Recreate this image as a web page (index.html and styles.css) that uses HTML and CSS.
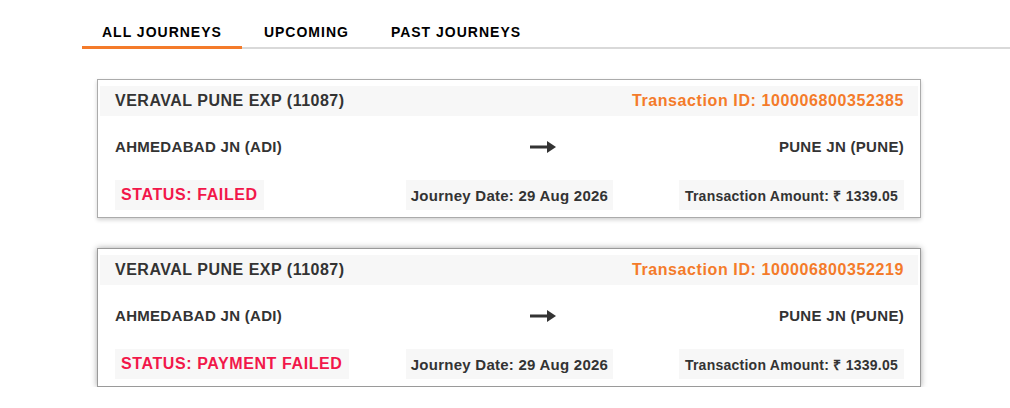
FILE: index.html
```html
<!DOCTYPE html>
<html lang="en">
<head>
    <meta charset="UTF-8">
    <meta name="viewport" content="width=device-width, initial-scale=1.0">
    <title>My Transactions</title>
    <link rel="stylesheet" href="styles.css">
</head>
<body>
    <nav class="tabs">
        <a class="tab active" href="#">ALL JOURNEYS</a>
        <a class="tab" href="#">UPCOMING</a>
        <a class="tab" href="#">PAST JOURNEYS</a>
    </nav>

    <div class="journeys">
        <div class="card">
            <div class="card-head">
                <span class="train-name">VERAVAL PUNE EXP (11087)</span>
                <span class="txn-id">Transaction ID: 100006800352385</span>
            </div>
            <div class="route">
                <span class="station">AHMEDABAD JN (ADI)</span>
                <div class="route-right">
                    <svg class="arrow" width="26" height="12" viewBox="0 0 26 12">
                        <rect x="0" y="4.5" width="18" height="3" fill="#333"/>
                        <polygon points="17,0 26,6 17,12" fill="#333"/>
                    </svg>
                    <span class="station">PUNE JN (PUNE)</span>
                </div>
            </div>
            <div class="card-foot">
                <span class="chip status">STATUS: FAILED</span>
                <span class="chip date">Journey Date: 29 Aug 2026</span>
                <span class="chip amount">Transaction Amount: ₹ 1339.05</span>
            </div>
        </div>

        <div class="card card-focus">
            <div class="card-head">
                <span class="train-name">VERAVAL PUNE EXP (11087)</span>
                <span class="txn-id">Transaction ID: 100006800352219</span>
            </div>
            <div class="route">
                <span class="station">AHMEDABAD JN (ADI)</span>
                <div class="route-right">
                    <svg class="arrow" width="26" height="12" viewBox="0 0 26 12">
                        <rect x="0" y="4.5" width="18" height="3" fill="#333"/>
                        <polygon points="17,0 26,6 17,12" fill="#333"/>
                    </svg>
                    <span class="station">PUNE JN (PUNE)</span>
                </div>
            </div>
            <div class="card-foot">
                <span class="chip status">STATUS: PAYMENT FAILED</span>
                <span class="chip date">Journey Date: 29 Aug 2026</span>
                <span class="chip amount">Transaction Amount: ₹ 1339.05</span>
            </div>
        </div>
    </div>
</body>
</html>
```

FILE: styles.css
```css
body {
    font-family: "Liberation Sans", Arial, sans-serif;
    background-color: #ffffff;
    color: #333333;
    margin: 0;
}

.tabs {
    display: flex;
    gap: 2px;
    margin: 22px 0 0 82px;
    border-bottom: 2px solid #d9d9d9;
}

.tab {
    display: block;
    padding: 0 20px 4px;
    line-height: 20px;
    font-size: 14px;
    font-weight: bold;
    letter-spacing: 1px;
    color: #000000;
    text-decoration: none;
    border-bottom: 3px solid transparent;
    margin-bottom: -2px;
}

.tab.active {
    border-bottom-color: #f47b2a;
}

.journeys {
    padding: 30px 0 0 97px;
}

.card {
    width: 818px;
    padding: 6px 2px 7px;
    margin-bottom: 30px;
    border: 1px solid #ababab;
    box-shadow: 0 2px 4px rgba(0, 0, 0, 0.18);
}

.card:last-child {
    margin-bottom: 0;
}

.card-focus {
    border-color: #9a9a9a;
    box-shadow: 0 0 6px rgba(0, 0, 0, 0.35);
}

.card-head {
    display: flex;
    justify-content: space-between;
    align-items: center;
    height: 30px;
    padding: 0 14px 0 15px;
    background-color: #f7f7f7;
}

.train-name {
    font-size: 16px;
    font-weight: bold;
    letter-spacing: 0.5px;
    color: #333333;
}

.txn-id {
    font-size: 16px;
    font-weight: bold;
    letter-spacing: 0.6px;
    color: #f47b2a;
}

.route {
    display: grid;
    grid-template-columns: 1fr 1fr;
    align-items: center;
    height: 61px;
    padding: 0 14px 3px 15px;
}

.route-right {
    display: flex;
    justify-content: space-between;
    align-items: center;
    padding-left: 20px;
}

.station {
    font-size: 15px;
    font-weight: bold;
    letter-spacing: 0.3px;
    color: #333333;
}

.arrow {
    display: block;
}

.card-foot {
    display: grid;
    grid-template-columns: 1fr auto 1fr;
    align-items: center;
    padding: 0 14px 0 15px;
}

.chip {
    display: flex;
    align-items: center;
    height: 30px;
    padding: 0 6px;
    background-color: #f7f7f7;
    font-weight: bold;
    color: #333333;
}

.status {
    justify-self: start;
    font-size: 16px;
    letter-spacing: 0.6px;
    color: #f2174a;
}

.date {
    justify-self: center;
    padding: 0 5px;
    font-size: 15px;
    letter-spacing: 0.25px;
}

.amount {
    justify-self: end;
    font-size: 14px;
    letter-spacing: 0.25px;
}
```
